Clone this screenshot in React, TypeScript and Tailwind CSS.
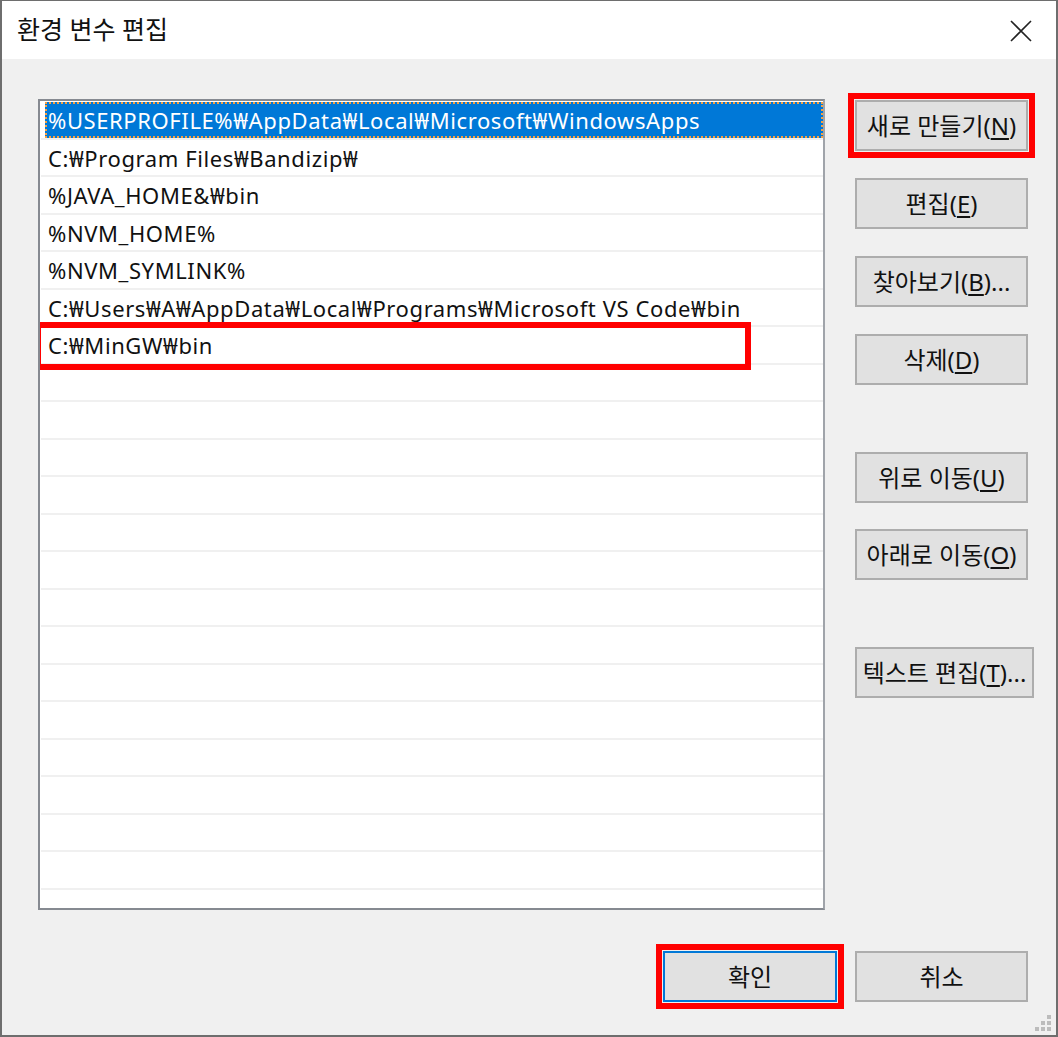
import { ReactNode } from 'react'

const FONT = "font-['Noto_Sans','Noto_Sans_CJK_KR',sans-serif]"

const paths = [
  '%USERPROFILE%₩AppData₩Local₩Microsoft₩WindowsApps',
  'C:₩Program Files₩Bandizip₩',
  '%JAVA_HOME&₩bin',
  '%NVM_HOME%',
  '%NVM_SYMLINK%',
  'C:₩Users₩A₩AppData₩Local₩Programs₩Microsoft VS Code₩bin',
  'C:₩MinGW₩bin'
]

const emptyRows = Array.from({ length: 16 })

type BtnProps = {
  label: string
  mnemonic: string
  suffix?: string
  className?: string
}

const Btn = ({ label, mnemonic, suffix, className = '' }: BtnProps) => {
  return (
    <button
      className={`h-[51px] w-[173px] shrink-0 bg-[#e1e1e1] border-2 border-[#adadad] text-[24px] leading-none text-[#111] flex items-center justify-center whitespace-nowrap ${className}`}
    >
      <span>
        {label}(<span className="underline underline-offset-[3px]">{mnemonic}</span>){suffix}
      </span>
    </button>
  )
}

const Row = ({ children, selected, marked }: { children?: ReactNode; selected?: boolean; marked?: boolean }) => (
  <div className="h-[37.5px] shrink-0 border-b-2 border-[#f0f0f0] flex">
    <div
      className={`relative ml-[4px] flex-1 flex items-center pl-[3px] pt-[2px] text-[22px] tracking-[0.6px] whitespace-nowrap ${
        selected ? 'bg-[#0078d7] text-white outline-2 outline-dotted outline-[#f8a040] -outline-offset-2' : 'text-[#111]'
      }`}
    >
      {children}
      {marked && (
        <div className="absolute left-[-10px] top-[-5px] w-[716px] h-[48px] border-[6px] border-[#ff0000]" />
      )}
    </div>
  </div>
)

export default function App() {
  return (
    <div className={`w-[1058px] h-[1037px] flex flex-col border-x-2 border-b-2 border-t border-[#6e6e6e] bg-[#f0f0f0] relative overflow-hidden ${FONT}`}>
      <div className="h-[58px] bg-white flex items-center justify-between pl-[15px] pr-[24px] shrink-0">
        <span className="text-[25px] text-[#111]">환경 변수 편집</span>
        <svg width="22" height="22" viewBox="0 0 22 22" className="mt-[2px]">
          <path d="M1 1 L21 21 M21 1 L1 21" stroke="#222" strokeWidth="1.6" fill="none" />
        </svg>
      </div>

      <div className="flex-1 flex flex-col pl-[36px] pt-[40px]">
        <div className="flex gap-[30px]">
          <div className="w-[787px] h-[811px] shrink-0 border-2 border-[#868a91] border-r-[#a0a4aa] bg-white overflow-hidden flex flex-col pt-[1px] pl-[1px]">
            {paths.map((p, i) => (
              <Row key={p} selected={i === 0} marked={i === paths.length - 1}>
                {p}
              </Row>
            ))}
            {emptyRows.map((_, i) => (
              <Row key={i} />
            ))}
          </div>

          <div className="flex flex-col pt-[1px] shrink-0">
            <Btn label="새로 만들기" mnemonic="N" className="outline-[6px] outline-[#ff0000] outline-offset-[1px]" />
            <Btn label="편집" mnemonic="E" className="mt-[27px]" />
            <Btn label="찾아보기" mnemonic="B" suffix="..." className="mt-[27px]" />
            <Btn label="삭제" mnemonic="D" className="mt-[27px]" />
            <Btn label="위로 이동" mnemonic="U" className="mt-[67px]" />
            <Btn label="아래로 이동" mnemonic="O" className="mt-[26px]" />
            <Btn label="텍스트 편집" mnemonic="T" suffix="..." className="mt-[67px] w-[179px]" />
          </div>
        </div>

        <div className="flex justify-end gap-[18px] mt-[41px] pr-[28px]">
          <button className="h-[51px] w-[174px] bg-[#e1e1e1] border-2 border-[#0078d7] text-[24px] text-[#111] outline-[6px] outline-[#ff0000] outline-offset-[1px]">
            확인
          </button>
          <button className="h-[51px] w-[173px] bg-[#e1e1e1] border-2 border-[#adadad] text-[24px] text-[#111]">
            취소
          </button>
        </div>
      </div>

      <svg width="18" height="18" viewBox="0 0 18 18" className="absolute right-[4px] bottom-[3px]">
        <rect x="13" y="1" width="4" height="4" fill="#bcbcbc" />
        <rect x="7" y="7" width="4" height="4" fill="#bcbcbc" />
        <rect x="13" y="7" width="4" height="4" fill="#bcbcbc" />
        <rect x="1" y="13" width="4" height="4" fill="#bcbcbc" />
        <rect x="7" y="13" width="4" height="4" fill="#bcbcbc" />
        <rect x="13" y="13" width="4" height="4" fill="#bcbcbc" />
      </svg>
    </div>
  )
}
